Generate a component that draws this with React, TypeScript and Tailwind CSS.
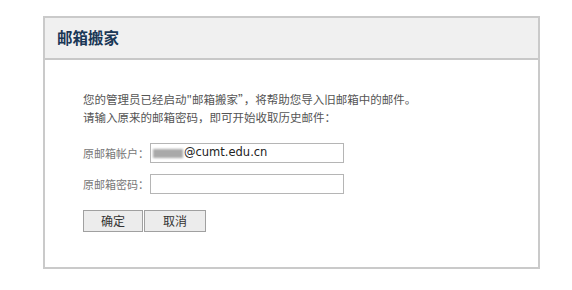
export default function App() {
  const cjk = { fontFamily: '"Noto Sans CJK SC", "Liberation Sans", sans-serif' };
  return (
    <div className="w-[572px] h-[290px] bg-white pt-[16px] pl-[43px]" style={cjk}>
      <div className="w-[497px] h-[253px] border-2 border-[#cacaca] bg-white flex flex-col">
        <div className="h-[42px] bg-[#f0f0f0] border-b-2 border-[#c8c8c8] flex items-center pl-[12px]">
          <h1 className="text-[15.5px] font-bold text-[#1a3756] leading-none">邮箱搬家</h1>
        </div>
        <div className="pl-[38px] pt-[30px] text-[11.5px] text-[#555]">
          <p className="leading-[18px]">您的管理员已经启动"邮箱搬家”，将帮助您导入旧邮箱中的邮件。</p>
          <p className="leading-[18px]">请输入原来的邮箱密码，即可开始收取历史邮件：</p>
          <div className="mt-[17px] flex flex-col gap-[11px]">
            <div className="flex items-center">
              <span className="w-[67px] shrink-0 whitespace-nowrap text-[11px] text-[#777]">原邮箱帐户：</span>
              <div className="w-[194px] h-[20px] border border-[#b5b5b5] flex items-center pl-[2px]">
                <span className="w-[30px] h-[9px] bg-[#a9a9a9] blur-[1px] mr-[1px]"></span>
                <span className="text-[11.5px] text-[#222]" style={{ fontFamily: '"DejaVu Sans", sans-serif' }}>
                  @cumt.edu.cn
                </span>
              </div>
            </div>
            <div className="flex items-center">
              <span className="w-[67px] shrink-0 whitespace-nowrap text-[11px] text-[#777]">原邮箱密码：</span>
              <div className="w-[194px] h-[20px] border border-[#b5b5b5]"></div>
            </div>
          </div>
          <div className="mt-[16px] flex gap-[1px]">
            <button className="w-[60px] h-[22px] bg-[#ececec] border border-[#a0a0a0] text-[12px] text-[#333]">确定</button>
            <button className="w-[62px] h-[22px] bg-[#ececec] border border-[#a0a0a0] text-[12px] text-[#333]">取消</button>
          </div>
        </div>
      </div>
    </div>
  );
}
